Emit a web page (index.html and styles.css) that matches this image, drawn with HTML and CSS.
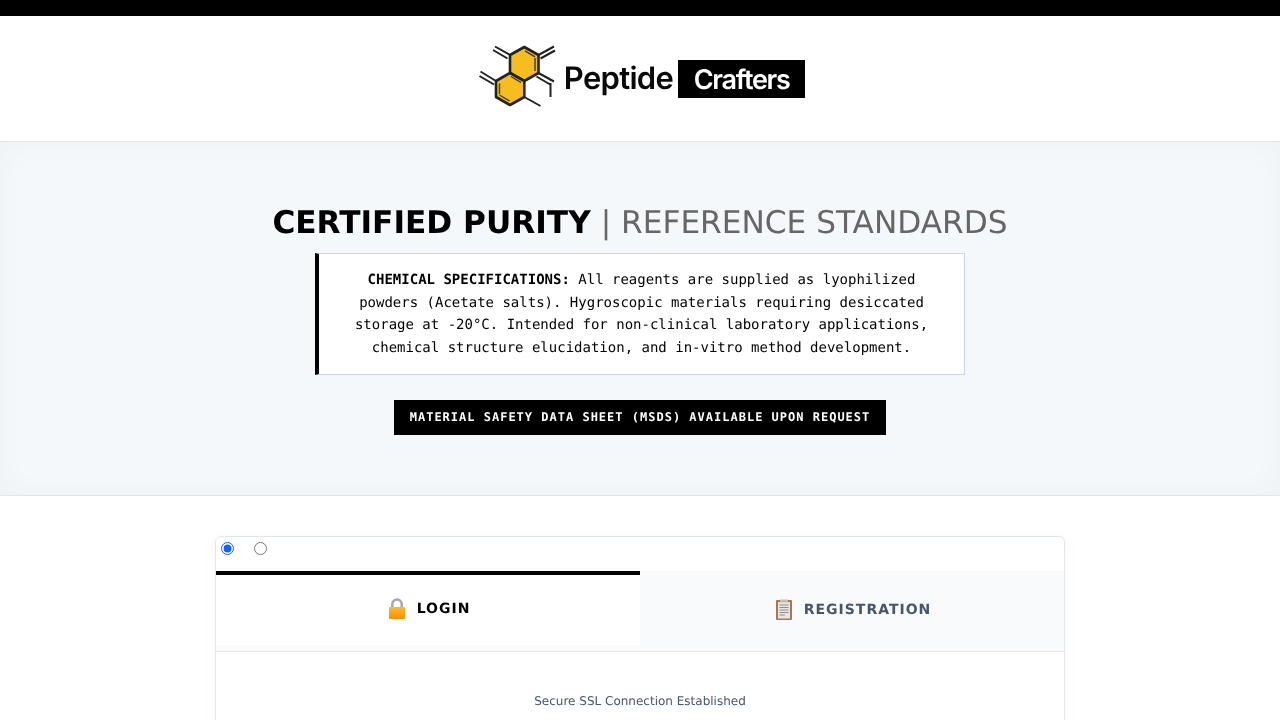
FILE: index.html
```html
<!DOCTYPE html>
<html lang="en">
<head>
    <meta charset="UTF-8">
    <meta name="viewport" content="width=device-width, initial-scale=1.0">
    <title>Peptide Crafters</title>
    <link rel="stylesheet" href="styles.css">
</head>
<body>
    <div class="page">
        <div class="top-bar"></div>

        <header class="site-header">
            <div class="logo">
                <svg class="logo-mark" viewBox="478 44 79 64" width="79" height="64" aria-hidden="true">
                    <polygon class="hex" points="524.300,47 538.500,55 538.500,73 524.300,81 510,73 510,55"/>
                    <polygon class="hex" points="510,73 524.300,81 524.300,97 510,105 496,97 496,81"/>
                    <path class="bond" d="M510 55L495 46.500M507.500 58.500L493 50M538.500 55L554 46.500M540.500 58.500L555 50.500M496 81L480.500 71.500M494 84.500L479.500 76M538.500 73L554 81.500M536.500 76.500L551 85M550.500 83V97M524.300 97L540.500 106"/>
                    <path class="bond-inner" d="M525 50.800L535 56.800M535 58V71M511 76.500L521 82.500M499.500 95L509.500 101M499.500 83.500V94"/>
                </svg>
                <span class="logo-first">Peptide</span>
                <span class="logo-second">Crafters</span>
            </div>
        </header>

        <section class="hero">
            <h1><strong>CERTIFIED PURITY</strong> | REFERENCE STANDARDS</h1>
            <div class="spec-box">
                <strong>CHEMICAL SPECIFICATIONS:</strong> All reagents are supplied as lyophilized powders (Acetate salts). Hygroscopic materials requiring desiccated storage at -20°C. Intended for non-clinical laboratory applications, chemical structure elucidation, and in-vitro method development.
            </div>
            <div class="msds-badge">MATERIAL SAFETY DATA SHEET (MSDS) AVAILABLE UPON REQUEST</div>
        </section>

        <main class="account-card">
            <div class="tab-radios">
                <input type="radio" name="tab" checked>
                <input type="radio" name="tab">
            </div>
            <div class="tabs">
                <label class="tab active">
                    <svg class="tab-icon" viewBox="0 0 18 21" width="18" height="21" aria-hidden="true">
                        <defs>
                            <linearGradient id="lock-body" x1="0" y1="0" x2="0" y2="1">
                                <stop offset="0" stop-color="#fdb92a"/>
                                <stop offset="1" stop-color="#f98f05"/>
                            </linearGradient>
                        </defs>
                        <path d="M4.300 10V6.500C4.300 3.500 6.300 1.500 9 1.500S13.700 3.500 13.700 6.500V10" fill="none" stroke="#a8a8a8" stroke-width="2.500"/>
                        <rect x="1" y="9" width="16" height="12" rx="1" fill="url(#lock-body)"/>
                    </svg>
                    LOGIN
                </label>
                <label class="tab">
                    <svg class="tab-icon" viewBox="0 0 18 21" width="18" height="21" aria-hidden="true">
                        <rect x="1" y="1" width="16" height="20" rx="1" fill="#a5794c"/>
                        <rect x="3" y="3" width="12" height="16.500" fill="#e6e6e6"/>
                        <rect x="5" y="0.500" width="8" height="3" fill="#c9bda9"/>
                        <path d="M4.500 6H13.500M4.500 8.500H13.500M4.500 11H13.500M4.500 13.500H13.500M4.500 16H10" stroke="#8d8d8d" stroke-width="1.200"/>
                    </svg>
                    REGISTRATION
                </label>
            </div>
            <div class="tab-body">
                <p class="ssl-note">Secure SSL Connection Established</p>
            </div>
        </main>
    </div>
</body>
</html>
```

FILE: styles.css
```css
* {
    box-sizing: border-box;
}

html, body {
    height: 100%;
}

body {
    margin: 0;
    overflow: hidden;
    font-family: "DejaVu Sans", sans-serif;
    line-height: 1.6;
    text-rendering: geometricPrecision;
    background-color: #fff;
    color: #000;
}

.page {
    will-change: transform;
}

.top-bar {
    height: 16px;
    background-color: #000;
}

.site-header {
    height: 126px;
    border-bottom: 1px solid #e2e6ea;
    display: flex;
    justify-content: center;
    padding: 27px 0 0 3px;
}

.logo {
    display: flex;
    align-items: flex-start;
    height: 66px;
}

.logo-mark {
    margin: 1px 7px 0 0;
}

.hex {
    fill: #f5bd1f;
    stroke: #222;
    stroke-width: 2.600;
    stroke-linejoin: round;
}

.bond {
    fill: none;
    stroke: #222;
    stroke-width: 2;
}

.bond-inner {
    fill: none;
    stroke: #3a3320;
    stroke-width: 1.400;
}

.logo-first {
    font-family: Inter, sans-serif;
    font-weight: 600;
    font-size: 31px;
    line-height: 40px;
    letter-spacing: -0.7px;
    margin: 16px 5px 0 0;
    color: #0a0a0a;
}

.logo-second {
    font-family: Inter, sans-serif;
    font-weight: 600;
    font-size: 27px;
    line-height: 39px;
    letter-spacing: -1.300px;
    width: 127px;
    height: 38px;
    margin-top: 17px;
    text-align: center;
    background-color: #000;
    color: #fff;
}

.hero {
    height: 354px;
    padding-top: 57px;
    background-color: #f5f8fa;
    border-bottom: 1px solid #e2e6ea;
    box-shadow: inset 0 0 30px rgba(0, 0, 0, 0.03);
    display: flex;
    flex-direction: column;
    align-items: center;
}

h1 {
    margin: 0 0 4px;
    font-size: 31.200px;
    font-weight: 400;
    color: #666;
}

h1 strong {
    color: #000;
}

.spec-box {
    width: 650px;
    padding: 15px 20px 14px;
    background-color: #fff;
    border: 1px solid #cbd5e1;
    border-left: 4px solid #000;
    font-family: "DejaVu Sans Mono", monospace;
    font-size: 14px;
    line-height: 22.700px;
    text-align: center;
}

.msds-badge {
    margin-top: 25px;
    padding: 8px 16px;
    background-color: #000;
    color: #fff;
    font-family: "DejaVu Sans Mono", monospace;
    font-size: 12px;
    font-weight: 700;
    letter-spacing: 1px;
}

.account-card {
    width: 850px;
    margin: 40px auto 0;
    background-color: #fff;
    border: 1px solid #e2e6ea;
    border-radius: 6px;
    box-shadow: 0 4px 20px rgba(0, 0, 0, 0.03);
}

.tab-radios {
    height: 34px;
    padding: 2px 0 0 0;
    display: flex;
    align-items: flex-start;
}

.tab-radios input {
    margin: 3px 15px 0 5px;
    accent-color: #0f62fe;
}

.tabs {
    display: flex;
    align-items: flex-start;
    height: 81px;
    background-color: #f8fafb;
    border-bottom: 1px solid #e2e6ea;
}

.tab {
    flex: 1;
    height: 80px;
    padding: 0 0 2px 3px;
    display: flex;
    align-items: center;
    justify-content: center;
    gap: 10px;
    font-size: 14px;
    font-weight: 700;
    letter-spacing: 1px;
    color: #4a5568;
}

.tab.active {
    height: 74px;
    border-top: 4px solid #000;
    background-color: #fff;
    color: #000;
}

.tab-icon {
    margin: 0 1px 2px -1px;
}

.tab-body {
    height: 200px;
    padding-top: 40px;
}

.ssl-note {
    margin: 0;
    text-align: center;
    font-size: 12px;
    color: #4a5568;
}
```
